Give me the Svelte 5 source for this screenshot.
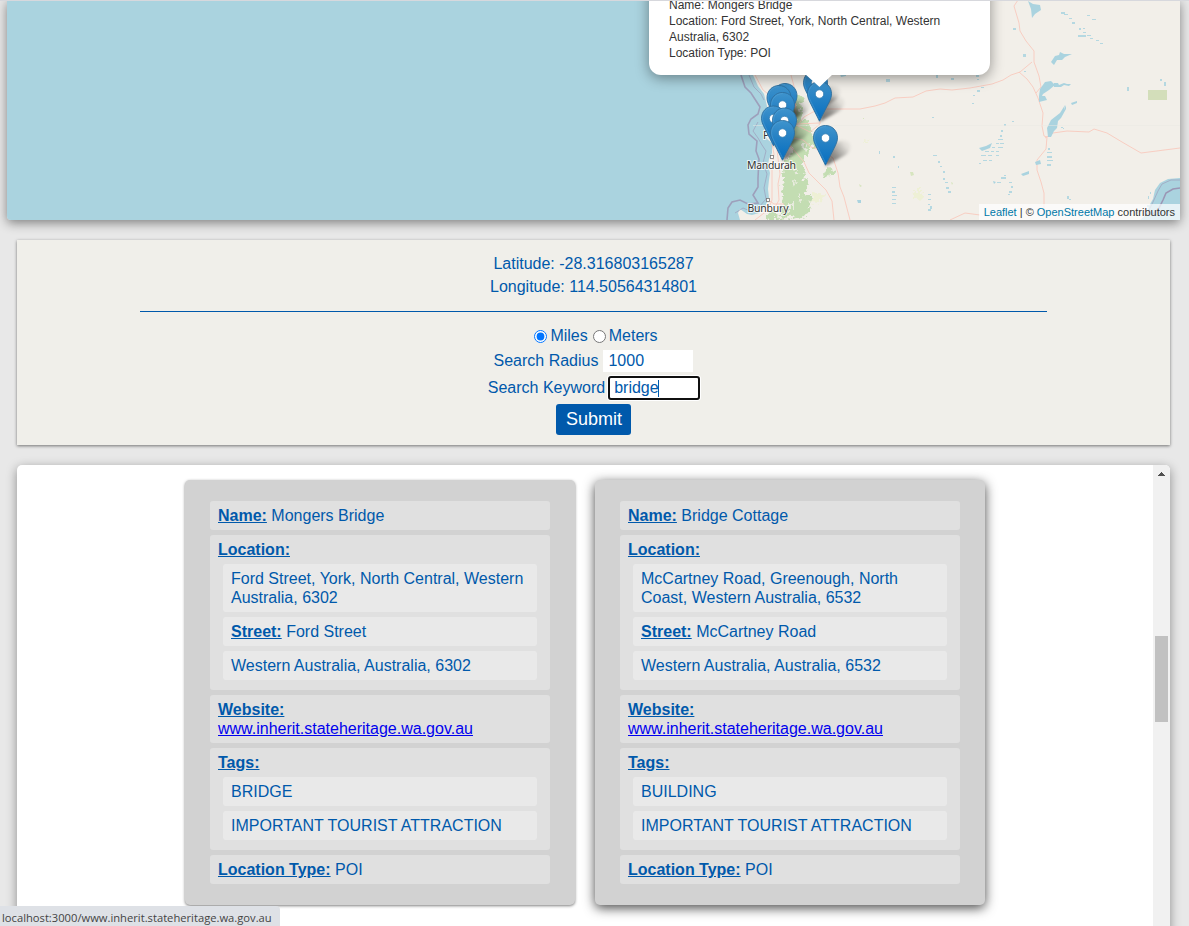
<script>
  const pins = [
    [815.5, 111], [785, 124], [779, 126], [782.5, 133], [773.5, 146.5],
    [784.5, 148.5], [819.5, 122], [782.5, 161], [825.5, 166]
  ];
  const cards = [
    { name: 'Mongers Bridge', address: 'Ford Street, York, North Central, Western Australia, 6302', street: 'Ford Street', region: 'Western Australia, Australia, 6302', tags: ['BRIDGE', 'IMPORTANT TOURIST ATTRACTION'] },
    { name: 'Bridge Cottage', address: 'McCartney Road, Greenough, North Coast, Western Australia, 6532', street: 'McCartney Road', region: 'Western Australia, Australia, 6532', tags: ['BUILDING', 'IMPORTANT TOURIST ATTRACTION'], active: true }
  ];
  const site = 'www.inherit.stateheritage.wa.gov.au';
  // Small salt lakes: x, y, width, height
  const lakes = [
    [1061,12,4,2],[1064,14,4,1],[1069,18,3,1],[1072,22,3,2],[1087,15,3,1],[1092,19,4,1],[1079,28,2,2],[1083,28,2,1],[1083,32,3,1],[1078,35,8,2],[1087,35,4,1],[1090,38,3,1],[1096,40,3,1],[1100,43,3,1],
    [1013,28,3,2],[1023,54,3,3],[1024,71,2,1],[1160,79,2,2],[1164,82,2,4],[1127,87,2,4],[1061,127,2,1],[1063,128,1,1],
    [1004,124,2,2],[1001,130,2,2],[1012,121,2,1],[1000,135,2,2],[998,139,5,1],[996,143,3,1],[1000,143,4,1],[992,147,3,1],[998,147,5,1],[985,151,4,1],[991,151,3,1],[996,151,3,1],[981,155,5,1],[988,155,4,1],[996,155,3,1],[983,160,4,1],[989,160,3,1],[979,163,2,1],
    [1048,148,2,2],[1047,152,5,1],[1047,156,5,2],[1047,160,6,1],[1047,164,4,2],[1004,175,2,1],[1001,177,5,2],[997,182,4,1],[1009,182,3,1],[1011,186,2,2],[1009,191,3,2],[1008,194,2,1],
    [933,155,4,1],[938,161,2,2],[940,166,2,1],[943,171,2,2],[943,178,2,2],[945,182,3,1],[946,187,3,2],[948,191,3,2],[930,206,2,3],[892,187,4,1],[892,191,3,2],[892,195,5,1],[892,199,4,1],[892,203,4,1],[928,194,3,1],[928,199,3,1],[928,204,2,1],[928,209,3,2],
    [936,75,2,3],[951,78,3,2],[976,75,3,2],[977,79,2,1],[981,87,3,1],[977,90,3,2],[973,95,2,1],[972,103,2,1],[886,79,4,3],[879,151,1,3],[893,156,2,2],[898,166,1,2],[932,117,2,1],[1067,196,2,3],[1069,199,2,1],[1147,205,2,2],[1150,192,1,2],[1148,196,1,3]
  ];
</script>

<div class="page">
  <section class="map">
    <svg class="tiles" viewBox="7 0 1173 220" width="1173" height="220">
      <defs>
        <linearGradient id="pin" x1="0" y1="0" x2="0" y2="1"><stop offset="0" stop-color="#3f94cd" /><stop offset=".35" stop-color="#2a84c5" /><stop offset="1" stop-color="#056ec0" /></linearGradient>
        <linearGradient id="cast" gradientUnits="userSpaceOnUse" x1="0" y1="0" x2="23" y2="-17"><stop offset="0" stop-color="#000" stop-opacity=".6" /><stop offset=".5" stop-color="#000" stop-opacity=".4" /><stop offset="1" stop-color="#000" stop-opacity=".06" /></linearGradient>
        <filter id="soft" x="-50%" y="-50%" width="200%" height="200%"><feGaussianBlur stdDeviation="1.8" /></filter>
        <filter id="rough" x="-10%" y="-10%" width="120%" height="120%"><feTurbulence type="fractalNoise" baseFrequency=".22" numOctaves="2" seed="4" /><feDisplacementMap in="SourceGraphic" scale="13" xChannelSelector="R" yChannelSelector="G" /></filter>
      </defs>
      <rect x="7" width="1173" height="220" fill="#aad3df" />
      <path fill="#f2efe9" d="M740 0 748 55 753 75 758 86 764 94 767 106 769 118 765 127 763 134 767 139 772 143 772 153 769 159 768 165 770 173 769 180 768 189 769 198 765 207 759 213 752 215 747 214 740 209 738 213 740 220H1180V0Z" />
      <path fill="#aad3df" d="M1180 178 1168 179 1160 183 1155 190 1153 199 1149 206 1147 214 1140 220H1180Z" />
      <g fill="none" stroke="#9b96b5">
        <path stroke-width="1.6" opacity=".85" d="M741 75 745 87 751 93 760 107 758 114 751 119 748 125 749 134 757 141 756 151 759 159 758 178 758 187 753 195 758 203 748 204 740 200 732 202 728 208 727 220" />
        <path stroke-width=".8" opacity=".75" d="M749 75 754 87 761 94 764 100M758 122 753 131 758 138 762 145 766 151 763 163 767 174 764 188 766 199 759 207 750 211 743 208 735 213M1180 180H1171L1162 184 1158 191 1153 202 1146 216" />
        <path stroke-width="1.6" d="M1180 188 1173 189 1166 193 1163 200 1159 208 1152 215" />
      </g>
      <g fill="#c3ddb2" filter="url(#rough)">
        <path d="M792 94 798 96 804 99 799 104 801 112 803 119 809 122 811 128 815 138 813 146 807 155 803 159 802 165 806 170 804 178 808 184 806 191 811 199 810 207 805 217 797 219 790 215 783 219 778 212 783 205 784 196 781 189 784 181 782 172 786 163 790 156 792 147 788 140 791 130 796 121 793 110Z" />
        <path d="M824 171 829 167 834 170 836 173 830 176 825 177Z" />
        <path d="M766 216 771 210 776 214 781 220H765Z" />
      </g>
      <g fill="#f2efe9" opacity=".8" filter="url(#rough)"><path d="m801 147 6-3 2 4-5 3zM793 170l3-2 2 4-4 1zM797 195l4-1 1 5-3 1zM790 204l3 0 1 5-4 0zM794 181l3 1-2 3z" /></g>
      <g fill="#eef0d5" filter="url(#rough)"><path d="m812 192 6 1 6 2-2 6-5 3-6-1zM913 190h8l2 6-3 3-6-2zM865 139l5 2-4 3z" /></g>
      <g fill="#d7e5bf"><rect x="1148" y="90" width="19" height="10" fill="#d3deba" /><path d="m910 172 3 0 1 3-3 1zM859 184l3 2-2 1zM863 118h1v1h-1zM951 182l2 1-1 2z" /></g>
      <g fill="none" stroke="#f8cabd" stroke-width=".9">
        <path d="M755 75 763 90 780 103 790 118 797 124 820 123M791 75 795 90 796 118M783 137 793 149 804 162 809 173 817 181 826 190 832 201 834 220M793 138 803 140 811 147 822 151 833 158 838 173 840 187 844 197 850 220M797 126 804 117 813 112 820 109 860 109 875 106 885 103 895 98 913 97 926 91 940 89 952 90 970 88 992 84 1003 80 1011 75 1020 72 1032 62M1019 72 1027 79 1033 87 1038 98 1043 113 1042 126 1044 136 1047 137 1046 149 1037 160 1037 170 1041 182 1044 193 1044 214M1018 0 1014 6 1019 23 1020 31 1026 41 1034 51 1034 62 1039 76 1041 87 1036 93M1045 138 1053 133 1067 131 1089 132 1094 129 1107 133 1122 142 1141 153 1180 148M950 220 965 213 980 215M821 109 820 124 810 132 796 125M832 150 827 164M772 144 774 154 772 168 772 200 768 210 755 220M777 150 780 174 778 184 779 200 773 211M767 199 774 204 784 204" />
      </g>
      <g fill="#aad3df">
        <path d="m1028 1 5 3 7 1 1 5-6 4-3 4-1-9zM1051 62l4-6 4-1 1-3 4 2 8 0-7 3-3 3-5 0-3 5zM1040 89l5-7 6-1 4 4-6 5-6 4-2 4-2-2zM1039 96l6 0 2 4-8 2zM1054 83l4 0 1 2 5-2 3 1 4 0-2 2-5-1-3 2-7 0zM1064 110l2-5 0 4-5 9-3 3-1 7-3 3-3 6-3 0-1-9 4-8 9-7 5-8zM1071 103l6-2 0 2-5 2zM979 148l7-2 6-3-2 5-8 3zM1021 174l8-3 0 3-6 2zM1035 162l5-2 1 4-5 1zM993 181l3 1-2 2zM857 200l4 0 0 3-3 0zM840 74l6-1 0 3-5 1z" />
        {#each lakes as [x, y, w, h]}<rect {x} {y} width={w} height={h} opacity=".85" />{/each}
      </g>
      <path stroke="#ebe9e3" stroke-width=".5" d="M753 125.500H1180" />
      <g class="place">
        <rect x="770.500" y="155.500" width="3" height="3" fill="#fff" stroke="#777" stroke-width=".8" />
        <rect x="766.500" y="198.500" width="3" height="3" fill="#fff" stroke="#777" stroke-width=".8" />
        <text x="763" y="139" font-size="12">Perth</text>
        <text x="747" y="168.500" textLength="49">Mandurah</text>
        <text x="747.500" y="212" textLength="41">Bunbury</text>
      </g>
      {#each pins as [x, y]}
        <path transform="translate({x} {y})" d="M0 0 3-13C5-21 13-27 20-25S26-15 20-11Z" fill="url(#cast)" filter="url(#soft)" />
      {/each}
      {#each pins as [x, y]}
        <g transform="translate({x - 12.5} {y - 41})">
          <path d="M12.500.5C5.600.5.5 6 .5 12.800c0 3 1 5.400 2.300 8.100L12.500 40.200l9.700-19.300c1.300-2.700 2.300-5.100 2.300-8.100C24.500 6 19.400.5 12.500.5Z" fill="url(#pin)" stroke="#2e6f9f" stroke-width=".9" />
          <path d="M12.500 1.600C6.300 1.600 1.600 6.500 1.600 12.700c0 2.600.9 5 2.200 7.700l8.700 17.400" fill="none" stroke="#5ea9da" stroke-width=".7" opacity=".6" />
          <circle cx="12.500" cy="13" r="4.200" fill="#fff" stroke="#2a76ac" stroke-width=".7" />
        </g>
      {/each}
    </svg>
    <div class="popup">
      <p>Name: Mongers Bridge</p>
      <p>Location: Ford Street, York, North Central, Western<br />Australia, 6302</p>
      <p>Location Type: POI</p>
      <svg class="tip" width="28" height="14" viewBox="0 0 28 14"><path d="M0 0H28L14.500 13z" fill="#fff" /></svg>
    </div>
    <div class="credit"><a href="#leaflet">Leaflet</a> | © <a href="#osm">OpenStreetMap</a> contributors</div>
  </section>

  <form class="search">
    <div class="coords">
      <div>Latitude: -28.316803165287</div>
      <div>Longitude: 114.50564314801</div>
    </div>
    <hr />
    <div class="units">
      <input type="radio" name="unit" checked aria-label="Miles" /><span>Miles</span>
      <input type="radio" name="unit" aria-label="Meters" /><span>Meters</span>
    </div>
    <div class="row radius"><span>Search Radius</span><input value="1000" aria-label="Search Radius" /></div>
    <div class="row keyword"><span>Search Keyword</span><div class="field"><input value="bridge" aria-label="Search Keyword" /><i></i></div></div>
    <button type="button">Submit</button>
  </form>

  <section class="results">
    <div class="list">
      {#each cards as card}
        <article class:active={card.active}>
          <div class="item"><b>Name:</b> {card.name}</div>
          <div class="item"><b>Location:</b>
            <div class="sub">{card.address}</div>
            <div class="sub"><b>Street:</b> {card.street}</div>
            <div class="sub">{card.region}</div>
          </div>
          <div class="item"><b>Website:</b><br /><a href={site}>{site}</a></div>
          <div class="item"><b>Tags:</b>
            {#each card.tags as tag}<div class="sub">{tag}</div>{/each}
          </div>
          <div class="item"><b>Location Type:</b> POI</div>
        </article>
      {/each}
    </div>
    <div class="scrollbar">
      <svg width="7" height="4" viewBox="0 0 7 4" shape-rendering="crispEdges"><path d="M3 0h1v1h1v1h1v1h1v1H0V3h1V2h1V1h1z" fill="#505050" /></svg>
      <div class="thumb"></div>
    </div>
  </section>
  <div class="status">localhost:3000/www.inherit.stateheritage.wa.gov.au</div>
</div>

<style>
  :global(body) { margin: 0; overflow: hidden; }
  .page { position: relative; box-sizing: border-box; width: 1189px; height: 926px; overflow: hidden; background: #e8e8e8; color: #0059ab; font: 16px/19px "Liberation Sans", Arial, sans-serif; display: flex; flex-direction: column; }
  .page::before { content: ""; position: absolute; inset: 0 0 auto; height: 1px; background: #d7d8dd; z-index: 5; }
  .map { position: relative; flex: none; width: 1173px; height: 220px; margin-left: 7px; border-radius: 0 0 4px 4px; box-shadow: 0 3px 11px rgba(0,0,0,.45); }
  .tiles { display: block; border-radius: 0 0 0 4px; }
  .place text { font-family: "Noto Sans", sans-serif; font-size: 10.5px; fill: #333; stroke: #fff; stroke-opacity: .75; stroke-width: 2px; paint-order: stroke; }
  .popup { position: absolute; left: 642px; top: -60px; width: 341px; height: 135px; box-sizing: border-box; padding: 57px 20px 0; border-radius: 12px; background: #fff; color: #333; box-shadow: 0 3px 14px rgba(0,0,0,.4); font-size: 12px; line-height: 16px; white-space: nowrap; }
  .popup p { margin: 0; }
  .tip { position: absolute; left: 156px; top: 134px; }
  .credit { position: absolute; right: 0; bottom: 0; padding: 0 5px; height: 16px; font-size: 11px; line-height: 16px; color: #333; background: rgba(255,255,255,.7); white-space: nowrap; }
  .credit a { color: #0078a8; text-decoration: none; }
  .search { flex: none; box-sizing: border-box; width: 1153px; height: 205px; margin: 20px 0 0 17px; padding-top: 12px; background: #f0efea; box-shadow: 0 1px 3px rgba(0,0,0,.5); display: flex; flex-direction: column; align-items: center; }
  .coords { text-align: center; line-height: 23px; }
  hr { width: 907px; height: 1px; margin: 13px 0 12px; border: 0; background: #0059ab; }
  .units { display: flex; align-items: center; height: 22px; margin-bottom: 2px; padding-left: 5px; }
  .units input { width: 13px; height: 13px; margin: 2px 3px 0 0; }
  .units span { margin-right: 5px; }
  .units span:last-child { margin-right: 0; }
  .row { display: flex; align-items: center; }
  .row span { padding-bottom: 2px; }
  .radius { height: 26px; gap: 5px; }
  .keyword { height: 28px; gap: 4px; }
  .row input { display: block; box-sizing: border-box; width: 90px; height: 22px; padding: 0 5px; border: 0; background: #fff; color: #0059ab; font: inherit; }
  .field { position: relative; }
  .field input { border-radius: 2px; outline: 2px solid #101010; outline-offset: -1px; box-shadow: 0 0 0 2px #fff; }
  .field i { position: absolute; left: 49px; top: 3px; width: 1px; height: 17px; background: #0059ab; }
  button { width: 75px; height: 31px; margin-top: 2px; padding: 0 0 0 1px; border: 0; border-radius: 3px; background: #0059ab; color: #fff; font: 18px/31px "Liberation Sans", Arial, sans-serif; }
  .results { flex: none; display: flex; width: 1153px; height: 480px; margin: 20px 0 0 17px; border-radius: 5px; background: #fff; box-shadow: 0 3px 11px rgba(0,0,0,.4); }
  .list { flex: 1; display: flex; justify-content: center; align-items: flex-start; gap: 20px; padding-top: 15px; }
  article { box-sizing: border-box; width: 390px; height: 425px; padding: 21px 25px 0; border-radius: 5px; background: #d2d2d2; box-shadow: 0 1px 3px rgba(0,0,0,.5); }
  article.active { box-shadow: 0 3px 12px rgba(0,0,0,.72); }
  .item { padding: 5px 8px; margin-bottom: 5px; border-radius: 3px; background: #e0e0e0; }
  .item:has(.sub) { padding-bottom: 10px; }
  .sub { margin: 5px 5px 0; padding: 5px 8px; border-radius: 3px; background: #e9e9e9; }
  b { text-decoration: underline; }
  .item a { color: #0000ee; }
  .scrollbar { width: 17px; background: #f1f1f1; border-radius: 0 5px 0 0; display: flex; flex-direction: column; align-items: center; padding-top: 7px; box-sizing: border-box; }
  .thumb { width: 13px; height: 86px; margin-top: 160px; background: #c1c1c1; }
  .status { position: absolute; left: 0; bottom: 0; box-sizing: border-box; width: 280px; height: 20px; padding: 2px 0 0 2px; border-radius: 0 4px 0 0; background: #dee1e6; color: #444; font: 11.2px/20px "Open Sans", sans-serif; white-space: nowrap; }
</style>
